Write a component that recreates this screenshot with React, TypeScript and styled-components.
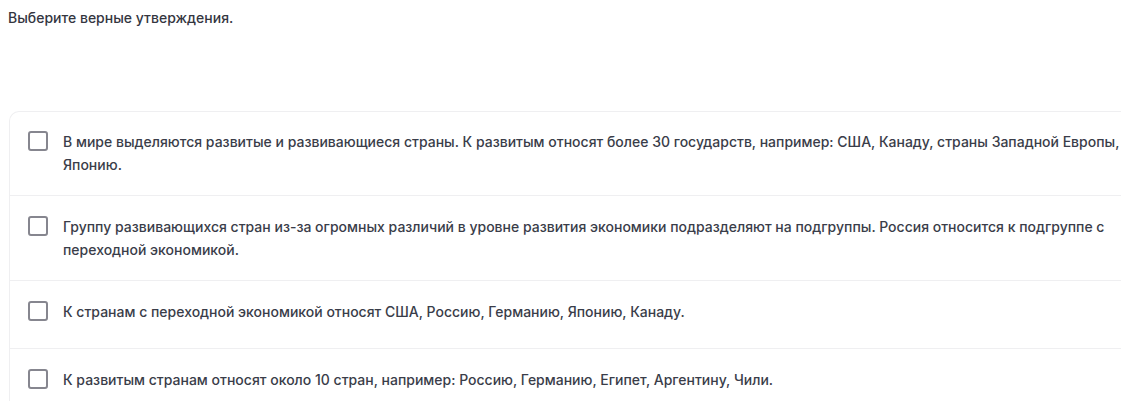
import { createGlobalStyle } from "styled-components";
import styled from "styled-components";

const statements = [
  "В мире выделяются развитые и развивающиеся страны. К развитым относят более 30 государств, например: США, Канаду, страны Западной Европы, Японию.",
  "Группу развивающихся стран из-за огромных различий в уровне развития экономики подразделяют на подгруппы. Россия относится к подгруппе с переходной экономикой.",
  "К странам с переходной экономикой относят США, Россию, Германию, Японию, Канаду.",
  "К развитым странам относят около 10 стран, например: Россию, Германию, Египет, Аргентину, Чили.",
];

export default function App() {
  return (
    <>
      <GlobalStyle />
      <Page>
        <Title>Выберите верные утверждения.</Title>
        <Card>
          {statements.map((text) => (
            <Row key={text}>
              <Box type="checkbox" />
              <Text>{text}</Text>
            </Row>
          ))}
        </Card>
      </Page>
    </>
  );
}

const GlobalStyle = createGlobalStyle`
  html, body {
    margin: 0;
    background: #ffffff;
    overflow: hidden;
  }
  body {
    font-family: Inter, "Noto Sans", sans-serif;
  }
`;

const Page = styled.main`
  padding: 8px 0 0 8px;
`;

const Title = styled.h1`
  margin: 0;
  font-size: 14px;
  line-height: 20px;
  font-weight: 500;
  color: #34363f;
`;

const Card = styled.section`
  margin-top: 83px;
  margin-left: 1px;
  width: 1140px;
  border: 1px solid #efeff1;
  border-right: none;
  border-bottom: none;
  border-top-left-radius: 10px;
`;

const Row = styled.label`
  display: flex;
  align-items: flex-start;
  gap: 15px;
  box-sizing: border-box;
  min-height: 68px;
  padding: 19px 20px 19px 18px;
  border-bottom: 1px solid #efeff1;

  &:first-child {
    padding-top: 18px;
  }
`;

const Box = styled.input`
  appearance: none;
  flex: none;
  width: 20px;
  height: 20px;
  margin: 1px 0 0 0;
  box-sizing: border-box;
  border: 2px solid #86868f;
  border-radius: 3px;
  background: #ffffff;
`;

const Text = styled.span`
  font-size: 14px;
  line-height: 23px;
  font-weight: 500;
  color: #3a3d49;
  max-width: 1058px;
`;
